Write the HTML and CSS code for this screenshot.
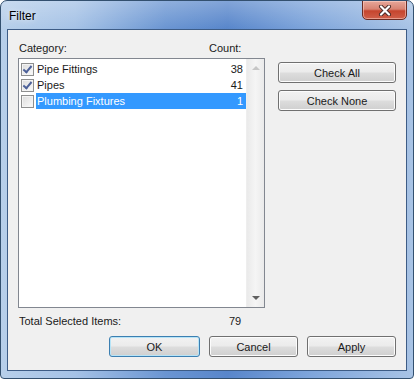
FILE: index.html
```html
<!DOCTYPE html>
<html lang="en">
<head>
  <meta charset="UTF-8" />
  <title>Filter</title>
  <link rel="stylesheet" href="styles.css">
</head>
<body>

<div class="window">
  <div class="titlebar">
    <span class="title">Filter</span>
    <button class="close-btn" aria-label="Close">
      <svg width="14" height="11" viewBox="0 0 14 11">
        <path d="M3 1.5 L11 9.5 M11 1.5 L3 9.5" stroke="#4a2a26" stroke-width="4" stroke-linecap="round"/>
        <path d="M3 1.5 L11 9.5 M11 1.5 L3 9.5" stroke="#fff" stroke-width="2.2" stroke-linecap="round"/>
      </svg>
    </button>
  </div>

  <div class="client">
    <div class="main-row">
      <div class="list-col">
        <div class="labels">
          <span class="cat-label">Category:</span>
          <span>Count:</span>
        </div>
        <div class="listbox">
          <div class="rows">
            <div class="row">
              <span class="checkbox checked"></span>
              <span class="name">Pipe Fittings</span>
              <span class="num">38</span>
            </div>
            <div class="row">
              <span class="checkbox checked"></span>
              <span class="name">Pipes</span>
              <span class="num">41</span>
            </div>
            <div class="row selected">
              <span class="checkbox"></span>
              <span class="name">Plumbing Fixtures</span>
              <span class="num">1</span>
            </div>
          </div>
          <div class="scrollbar">
            <span class="arrow up"></span>
            <span class="arrow down"></span>
          </div>
        </div>
      </div>
      <div class="side-col">
        <button class="btn">Check All</button>
        <button class="btn">Check None</button>
      </div>
    </div>

    <div class="total">
      <span class="total-label">Total Selected Items:</span>
      <span>79</span>
    </div>

    <div class="footer">
      <button class="btn default">OK</button>
      <button class="btn">Cancel</button>
      <button class="btn">Apply</button>
    </div>
  </div>
</div>

</body>
</html>
```

FILE: styles.css
```css
body {
  margin: 0;
  font-family: "Liberation Sans", Arial, sans-serif;
  font-size: 11px;
  color: #1a1a1a;
  background: #fff;
}

.window {
  width: 414px;
  height: 379px;
  box-sizing: border-box;
  border: 1px solid #33506f;
  border-radius: 7px 7px 4px 4px;
  background:
    linear-gradient(180deg, rgba(255,255,255,0.25) 0px, rgba(255,255,255,0) 28px),
    linear-gradient(90deg, #b7cfea 0%, #a5c2e6 18%, #6a95d2 40%, #5886cb 55%, #7ea5db 75%, #a8c3e5 100%);
  display: flex;
  flex-direction: column;
  overflow: hidden;
}

.titlebar {
  height: 28px;
  display: flex;
  align-items: flex-start;
  justify-content: space-between;
  padding-left: 8px;
  padding-right: 6px;
}

.title {
  margin-top: 8px;
  font-size: 12px;
  color: #000;
  text-shadow: 0 0 6px rgba(255,255,255,0.9);
}

.close-btn {
  width: 45px;
  height: 20px;
  margin-top: -1px;
  border: 1px solid #6b2c24;
  border-radius: 0 0 5px 5px;
  background: linear-gradient(180deg, #e7a79a 0%, #d88372 45%, #c5452e 55%, #d0604a 100%);
  box-shadow: inset 0 0 0 1px rgba(255,220,210,0.5);
  display: flex;
  align-items: center;
  justify-content: center;
  padding: 0;
}

.client {
  margin: 0 6px;
  height: 342px;
  box-sizing: border-box;
  border: 1px solid #3d5c86;
  background: #f0f0f0;
  padding: 11px 10px 0 10px;
}

.main-row {
  display: flex;
}

.list-col {
  width: 247px;
}

.labels {
  display: flex;
  height: 14px;
  line-height: 14px;
  padding-left: 1px;
}

.cat-label {
  width: 190px;
}

.listbox {
  margin-top: 3px;
  height: 250px;
  box-sizing: border-box;
  border: 1px solid #828790;
  background: #fff;
  display: flex;
}

.rows {
  flex: 1;
  padding-top: 2px;
}

.row {
  display: flex;
  align-items: center;
  height: 16px;
  padding-left: 2px;
}

.checkbox {
  width: 11px;
  height: 11px;
  border: 1px solid #8e8f8f;
  background: linear-gradient(135deg, #dcdcdc, #fbfbfb);
  box-shadow: inset 0 0 0 1px #f4f4f4;
  flex-shrink: 0;
  position: relative;
}

.checkbox.checked::after {
  content: "";
  position: absolute;
  left: 3px;
  top: 0px;
  width: 3px;
  height: 7px;
  border: solid #4d6199;
  border-width: 0 2px 2px 0;
  transform: rotate(40deg);
}

.name {
  flex: 1;
  margin-left: 2px;
  height: 16px;
  line-height: 16px;
  padding-left: 1px;
}

.num {
  padding-right: 3px;
  height: 16px;
  line-height: 16px;
}

.row.selected .name,
.row.selected .num {
  background: #3399ff;
  color: #fff;
}

.scrollbar {
  width: 17px;
  background: linear-gradient(90deg, #eaeaea, #f5f5f5 50%, #eaeaea);
  border-left: 1px solid #eee;
  display: flex;
  flex-direction: column;
  justify-content: space-between;
  align-items: center;
  padding: 7px 0 7px;
}

.arrow {
  width: 0;
  height: 0;
  border-left: 4px solid transparent;
  border-right: 4px solid transparent;
}

.arrow.up {
  border-bottom: 4px solid #c6c6c6;
}

.arrow.down {
  border-top: 4px solid #606060;
}

.side-col {
  margin-left: 13px;
  padding-top: 21px;
  display: flex;
  flex-direction: column;
  gap: 7px;
}

.btn {
  height: 21px;
  box-sizing: border-box;
  border: 1px solid #707070;
  border-radius: 3px;
  background: linear-gradient(180deg, #f2f2f2 0%, #ebebeb 48%, #dddddd 52%, #cfcfcf 100%);
  box-shadow: inset 0 0 0 1px #fcfcfc;
  font-family: inherit;
  font-size: 11px;
  color: #1a1a1a;
  padding: 0;
  cursor: pointer;
}

.side-col .btn {
  width: 118px;
}

.total {
  display: flex;
  height: 14px;
  line-height: 14px;
  margin-top: 6px;
  padding-left: 1px;
}

.total-label {
  width: 210px;
}

.footer {
  display: flex;
  justify-content: flex-end;
  gap: 9px;
  margin-top: 8px;
}

.footer .btn {
  width: 89px;
}

.btn.default {
  width: 91px;
  border-color: #3c7fb1;
  box-shadow: inset 0 0 0 1px #b7e4f7;
}
```
